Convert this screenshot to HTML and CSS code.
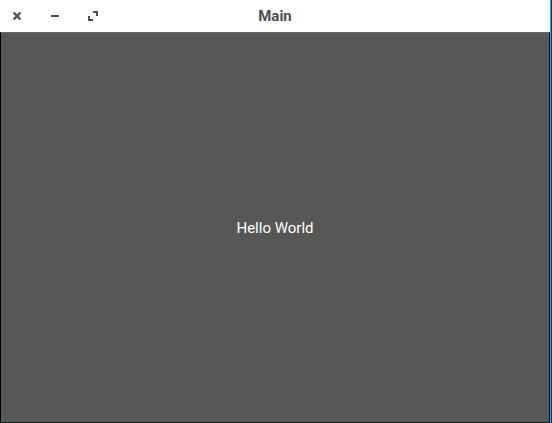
FILE: index.html
```html
<!DOCTYPE html>
<html lang="en">
<head>
<meta charset="utf-8">
<title>Main</title>
<link rel="stylesheet" href="styles.css">
</head>
<body>
<div class="window">
  <header class="titlebar">
    <div class="controls">
      <button class="control" type="button" aria-label="Close"><svg viewBox="0 0 12 12"><path d="M2.5 2.5l7 7M9.5 2.5l-7 7" stroke-width="2.2"/></svg></button>
      <button class="control" type="button" aria-label="Minimize"><svg viewBox="0 0 12 12"><path d="M2 6h8" stroke-width="2"/></svg></button>
      <button class="control" type="button" aria-label="Maximize"><svg viewBox="0 0 12 12"><path d="M6 2h4v4M2 6v4h4" stroke-width="2"/></svg></button>
    </div>
    <h1 class="title">Main</h1>
  </header>
  <main class="content"><p class="message">Hello World</p></main>
</div>
</body>
</html>
```
FILE: styles.css
```css
* {
  box-sizing: border-box;
}

body {
  margin: 0;
  min-height: 100vh;
  display: flex;
  background: #101a20;
  font-family: Roboto, "Noto Sans", sans-serif;
  font-size: 15px;
  line-height: 20px;
}

.window {
  flex: 1;
  display: flex;
  flex-direction: column;
  margin-right: 1px;
  border-right: 1px solid #00b4f0;
}

.titlebar {
  display: grid;
  grid-template-columns: 1fr auto 1fr;
  align-items: center;
  height: 32px;
  padding: 0 11px;
  background: #fff;
  color: #4d4d4d;
}

.controls {
  display: flex;
  gap: 26px;
}

.control {
  width: 12px;
  height: 12px;
  padding: 0;
  border: 0;
  background: none;
  color: inherit;
}

.control svg {
  display: block;
  fill: none;
  stroke: currentColor;
}

.title {
  margin: 0;
  font-size: 15px;
  font-weight: 700;
}

.content {
  flex: 1;
  display: flex;
  align-items: center;
  justify-content: center;
  border: 1px solid #000;
  border-top-color: #696969;
  border-bottom-color: #21151b;
  background: #575757;
  color: #fff;
}

.message {
  margin: 0;
}
```
